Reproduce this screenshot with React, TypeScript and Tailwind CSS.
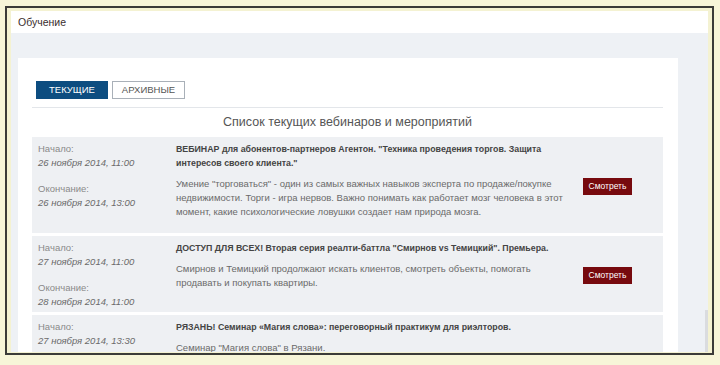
import type { ReactNode } from "react";

type Sobytie = {
  nachalo: string;
  okonchanie?: string;
  zagolovok: ReactNode;
  opisanie: ReactNode;
  knopka?: boolean;
};

const sobytiya: Sobytie[] = [
  {
    nachalo: "26 ноября 2014, 11:00",
    okonchanie: "26 ноября 2014, 13:00",
    zagolovok: (
      <>
        ВЕБИНАР для абонентов-партнеров Агентон. "Техника проведения торгов. Защита
        <br />
        интересов своего клиента."
      </>
    ),
    opisanie: (
      <>
        Умение "торговаться" - один из самых важных навыков эксперта по продаже/покупке
        <br />
        недвижимости. Торги - игра нервов. Важно понимать как работает мозг человека в этот
        <br />
        момент, какие психологические ловушки создает нам природа мозга.
      </>
    ),
    knopka: true,
  },
  {
    nachalo: "27 ноября 2014, 11:00",
    okonchanie: "28 ноября 2014, 11:00",
    zagolovok: <>ДОСТУП ДЛЯ ВСЕХ! Вторая серия реалти-баттла "Смирнов vs Темицкий". Премьера.</>,
    opisanie: (
      <>
        Смирнов и Темицкий продолжают искать клиентов, смотреть объекты, помогать
        <br />
        продавать и покупать квартиры.
      </>
    ),
    knopka: true,
  },
  {
    nachalo: "27 ноября 2014, 13:30",
    zagolovok: <>РЯЗАНЬ! Семинар «Магия слова»: переговорный практикум для риэлторов.</>,
    opisanie: <>Семинар "Магия слова" в Рязани.</>,
  },
];

function Stroka({ s }: { s: Sobytie }) {
  return (
    <div className="flex items-center bg-[#eef0f3] pl-[6px] pr-[31px] pt-[5px] pb-[3px]">
      <div className="w-[138px] shrink-0 self-start text-[9.5px] leading-[14px]">
        <p className="text-[#8a8a8a]">Начало:</p>
        <p className="italic text-[#6a6a6a]">{s.nachalo}</p>
        {s.okonchanie ? (
          <>
            <p className="mt-[12px] text-[#8a8a8a]">Окончание:</p>
            <p className="italic text-[#6a6a6a]">{s.okonchanie}</p>
          </>
        ) : null}
      </div>
      <div className="min-w-0 flex-1 self-start">
        <p className="whitespace-nowrap text-[8.8px] font-bold leading-[14px] text-[#444]">
          {s.zagolovok}
        </p>
        <p className="mt-[7px] mb-[11px] whitespace-nowrap text-[9.5px] leading-[14px] text-[#6a6a6a]">
          {s.opisanie}
        </p>
      </div>
      {s.knopka ? (
        <button
          type="button"
          className="h-[17px] w-[49px] shrink-0 bg-[#770a0e] text-[8.5px] leading-[17px] text-white"
        >
          Смотреть
        </button>
      ) : null}
    </div>
  );
}

export default function App() {
  return (
    <div
      className="h-[365px] w-[720px] overflow-hidden bg-[#f7f5d8] pl-[5px] pt-[6px]"
      style={{ fontFamily: '"Liberation Sans", Arial, sans-serif' }}
    >
      <div className="h-[349px] w-[709px] border-2 border-[#3b3b38] bg-[#f4f2d2] px-[4px] pt-[3px] pb-[1px]">
        <div className="relative flex h-full flex-col overflow-hidden bg-[#eef1f5]">
          {/* верхняя полоса */}
          <div className="flex h-[22px] shrink-0 items-center bg-white pl-[7px] pt-[1px] text-[10.5px] text-[#3a2e2e]">
            Обучение
          </div>

          <div className="flex-1 pl-[7px] pr-[30px] pt-[25px]">
            <div className="h-[400px] bg-white px-[14px] pr-[15px] pt-[23px]">
              {/* вкладки */}
              <div className="ml-[4px] flex gap-[4px]">
                <button
                  type="button"
                  className="h-[18px] w-[72px] bg-[#0d4d80] text-[9.5px] text-white"
                >
                  ТЕКУЩИЕ
                </button>
                <button
                  type="button"
                  className="h-[18px] w-[73px] border border-[#a9b0b8] bg-white text-[9.5px] text-[#555]"
                >
                  АРХИВНЫЕ
                </button>
              </div>

              <div className="mt-[8px] border-t border-[#e3e6ea]" />

              <h2 className="pt-[5px] pb-[5px] text-center text-[12.5px] leading-[19px] font-normal text-[#555]">
                Список текущих вебинаров и мероприятий
              </h2>

              <div className="flex flex-col gap-[3px]">
                {sobytiya.map((s, i) => (
                  <Stroka key={i} s={s} />
                ))}
              </div>
            </div>
          </div>

          {/* полоса прокрутки */}
          <div className="absolute bottom-0 right-0 h-[42px] w-[3px] bg-[#dadcdf]" />
        </div>
      </div>
    </div>
  );
}
